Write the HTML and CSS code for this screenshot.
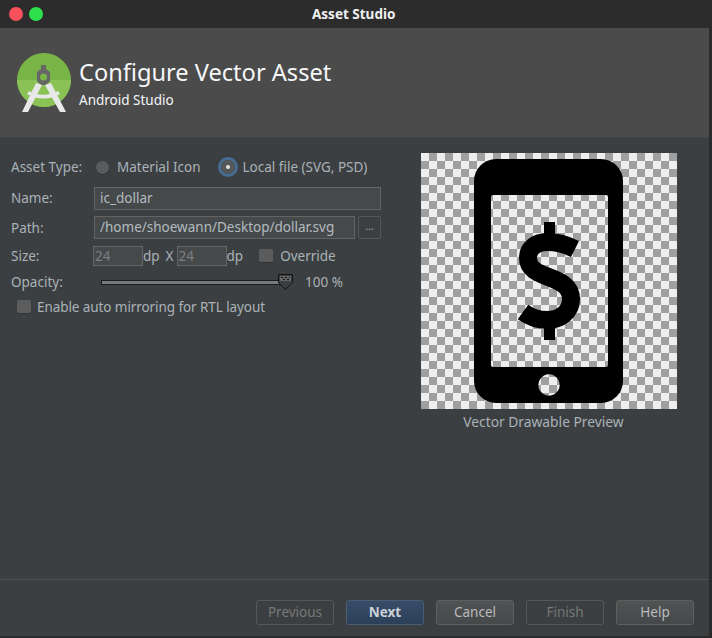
FILE: index.html
```html
<!DOCTYPE html>
<html lang="en">
<head>
    <meta charset="UTF-8">
    <title>Asset Studio</title>
    <link rel="stylesheet" href="styles.css">
</head>
<body>
    <div class="window">
        <div class="titlebar">
            <span class="dot dot-red"></span>
            <span class="dot dot-green"></span>
            <span class="title">Asset Studio</span>
        </div>
        <div class="header">
            <svg class="logo" width="55" height="60" viewBox="0 0 55 60">
                <circle cx="27" cy="27" r="27" fill="#79b546"/>
                <path d="M0 27a27 27 0 0 0 54 0z" fill="#8ac255"/>
                <path d="M24 12h5v4l4 3v9l-4 4h-5l-4-4v-9l4-3z" fill="#666"/>
                <circle cx="26.500" cy="24" r="3.500" fill="#79b546"/>
                <path d="M19 30l6 2-14 27H5zM34 30l-6 2 15 27h6z" fill="#e8e8e8"/>
                <path d="M12 38c9 5 20 5 29 0l2 3c-10 6-23 6-33 0z" fill="#e8e8e8"/>
            </svg>
            <div>
                <div class="heading">Configure Vector Asset</div>
                <div class="subheading">Android Studio</div>
            </div>
        </div>
        <div class="content">
            <div class="form">
                <div class="row row-type">
                    <span class="label label-type">Asset Type:</span>
                    <span class="radio"></span>
                    <span class="radio-text">Material Icon</span>
                    <span class="radio radio-on"></span>
                    <span>Local file (SVG, PSD)</span>
                </div>
                <div class="row row-name">
                    <span class="label">Name:</span>
                    <div class="field field-name">ic_dollar</div>
                </div>
                <div class="row row-path">
                    <span class="label">Path:</span>
                    <div class="field field-path">/home/shoewann/Desktop/dollar.svg</div>
                    <div class="browse">...</div>
                </div>
                <div class="row row-size">
                    <span class="label">Size:</span>
                    <div class="size-box">24</div>
                    <span class="unit">dp</span>
                    <span class="times">X</span>
                    <div class="size-box">24</div>
                    <span class="unit">dp</span>
                    <span class="check check-override"></span>
                    <span>Override</span>
                </div>
                <div class="row row-opacity">
                    <span class="label">Opacity:</span>
                    <div class="slider">
                        <svg class="thumb" width="15" height="16" viewBox="0 0 15 16">
                            <path d="M.5.5h14v8l-7 7-7-7z" fill="#3c3f41" stroke="#111"/>
                            <path d="M2 2h11v5H2z" fill="#666"/>
                            <path d="M3 3h2v1H3zM7 3h2v1H7zM11 3h1v1h-1zM5 5h2v1H5zM9 5h2v1H9z" fill="#111"/>
                        </svg>
                    </div>
                    <span>100 %</span>
                </div>
                <div class="row row-mirror">
                    <span class="check"></span>
                    <span>Enable auto mirroring for RTL layout</span>
                </div>
            </div>
            <div class="preview">
                <div class="canvas">
                    <svg width="256" height="256" viewBox="0 0 256 256">
                        <path fill-rule="evenodd" fill="#000" d="M75 6h105a22 22 0 0 1 22 22v200a22 22 0 0 1-22 22H75a22 22 0 0 1-22-22V28A22 22 0 0 1 75 6zM70 44v168a2 2 0 0 0 2 2h113a2 2 0 0 0 2-2V44a2 2 0 0 0-2-2H72a2 2 0 0 0-2 2zM128 221.300a10.700 10.700 0 1 0 .01 0z"/>
                        <path fill="none" stroke="#000" stroke-width="18" d="M154 96C146 92 137 89 127 89 115 89 107 95 107 105 107 128 150 120 150 146 150 159 139 167 126 167 117 167 109 164 102 159"/>
                        <path fill="#000" d="M123 69h11v22h-11zM123 165h11v22h-11z"/>
                    </svg>
                </div>
                <div class="caption">Vector Drawable Preview</div>
            </div>
        </div>
        <div class="footer">
            <div class="btn btn-off">Previous</div>
            <div class="btn btn-next">Next</div>
            <div class="btn">Cancel</div>
            <div class="btn btn-off">Finish</div>
            <div class="btn">Help</div>
        </div>
    </div>
</body>
</html>
```
FILE: styles.css
```css
html, body {
    margin: 0;
    height: 100%;
    background: #2b2b2b;
}
body {
    font-family: "Noto Sans", sans-serif;
    font-size: 13.5px;
    color: #a9b2b8;
}
.window {
    width: 709px;
    height: 636px;
    display: flex;
    flex-direction: column;
    background: #3c3f41;
}
.titlebar {
    width: 712px;
    height: 28px;
    flex: none;
    display: flex;
    align-items: center;
    background: #2c2c2c;
    position: relative;
}
.dot {
    width: 14px;
    height: 14px;
    border-radius: 50%;
}
.dot-red {
    margin-left: 9px;
    background: #f9505a;
}
.dot-green {
    margin-left: 6px;
    background: #2de04c;
}
.title {
    position: absolute;
    left: 312px;
    font-size: 13.5px;
    font-weight: 700;
    color: #f0f0f0;
}
.header {
    height: 110px;
    flex: none;
    box-sizing: border-box;
    display: flex;
    padding: 25px 0 0 17px;
    gap: 7px;
    background: #4b4b4b;
    border-bottom: 1px solid #414345;
    color: #f4f6f8;
}
.heading {
    font-size: 23.6px;
    line-height: 32px;
    margin-top: 3px;
}
.subheading {
    font-size: 13.5px;
    line-height: 20px;
    margin-top: 2px;
}
.content {
    flex: 1;
    display: flex;
}
.form {
    width: 421px;
    padding-top: 15px;
    box-sizing: border-box;
}
.row {
    display: flex;
    align-items: center;
    padding-left: 11px;
}
.label {
    width: 83px;
    flex: none;
}
.label-type {
    width: 85px;
}
.row-type {
    height: 28px;
}
.radio {
    width: 13px;
    height: 13px;
    border-radius: 50%;
    background: #5a5b5c;
    box-shadow: 0 1px 0 #333;
    margin-right: 8px;
}
.radio-text {
    margin-right: 20px;
}
.radio-on {
    width: 14px;
    height: 14px;
    background: radial-gradient(#ddd 0 1.500px, #55585a 2.500px);
    box-shadow: 0 0 0 3px #466d94;
}
.row-name {
    height: 34px;
}
.field {
    height: 23px;
    box-sizing: border-box;
    border: 1px solid #646464;
    background: #45494a;
    padding-left: 5px;
    line-height: 21px;
    color: #b3bbc0;
}
.field-name {
    width: 287px;
}
.field-path {
    width: 261px;
}
.browse {
    width: 23px;
    height: 23px;
    box-sizing: border-box;
    margin-left: 3px;
    border: 1px solid #565656;
    border-radius: 2px;
    text-align: center;
    font-size: 10px;
    line-height: 19px;
}
.row-path {
    height: 25px;
}
.row-size {
    height: 32px;
}
.size-box {
    width: 50px;
    height: 20px;
    margin-left: -1px;
    box-sizing: border-box;
    border: 1px solid #646464;
    background: #45494a;
    padding-left: 1px;
    line-height: 18px;
    color: #7b7f82;
}
.times {
    margin: 0 4px 0 6px;
}
.check {
    width: 14px;
    height: 14px;
    box-sizing: border-box;
    border-radius: 2px;
    background: #5c5c5d;
    border-bottom: 1px solid #333;
}
.check-override {
    margin: 0 7px 0 16px;
}
.row-opacity {
    height: 20px;
}
.slider {
    width: 184px;
    height: 5px;
    box-sizing: border-box;
    margin: 0 20px 0 7px;
    border: 1px solid #1c1c1c;
    background: #777a7b;
    position: relative;
}
.thumb {
    position: absolute;
    left: 176px;
    top: -7px;
}
.row-mirror {
    height: 29px;
    padding-left: 17px;
    gap: 6px;
    letter-spacing: -0.08px;
}
.preview {
    text-align: center;
    padding-top: 15px;
    width: 256px;
}
.canvas {
    width: 256px;
    height: 256px;
    background-color: #eee;
    background-image: conic-gradient(#a0a0a0 25%, transparent 0 50%, #a0a0a0 0 75%, transparent 0);
    background-size: 16px 16px;
}
.canvas svg {
    display: block;
}
.caption {
    margin: 3px 11px 0 0;
    line-height: 20px;
    font-size: 13.8px;
}
.footer {
    height: 57px;
    flex: none;
    box-sizing: border-box;
    border-top: 1px solid #515151;
    display: flex;
    justify-content: flex-end;
    gap: 12px;
    padding: 20px 15px 0 0;
}
.btn {
    width: 78px;
    height: 25px;
    box-sizing: border-box;
    border: 1px solid #5e6060;
    border-radius: 3px;
    background: linear-gradient(#505354, #46494a);
    text-align: center;
    line-height: 22px;
    color: #bbb;
}
.btn-off {
    background: none;
    border-color: #55585a;
    color: #777;
}
.btn-next {
    background: linear-gradient(#384c68, #2b4058);
    border-color: #4b5d72;
    font-weight: 700;
    color: #ccd2d8;
}
```
